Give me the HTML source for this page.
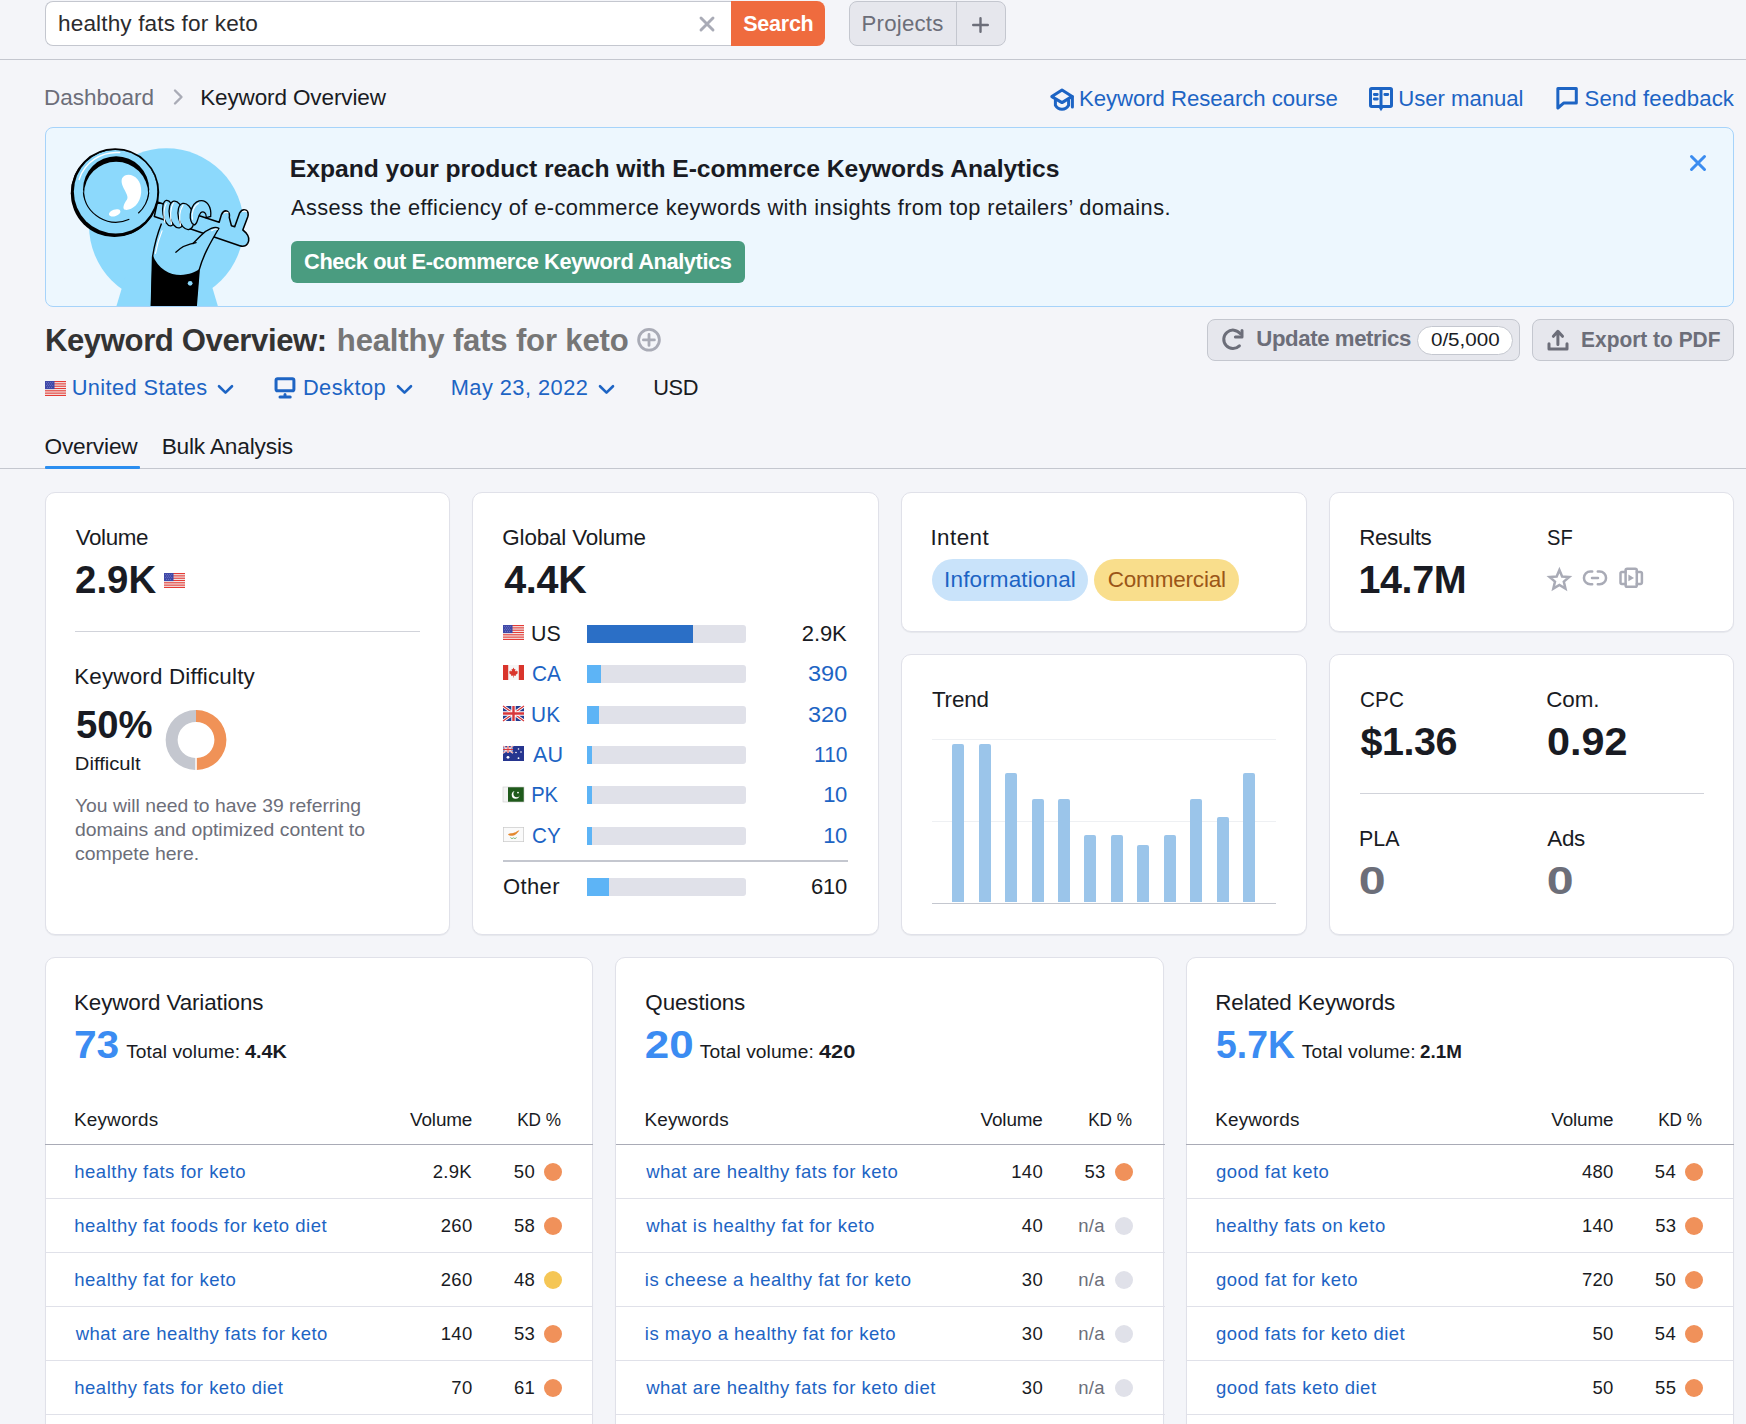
<!DOCTYPE html>
<html><head><meta charset="utf-8"><title>Keyword Overview</title>
<style>
html,body{margin:0;padding:0;}
body{width:1746px;height:1424px;overflow:hidden;background:#f4f5f9;position:relative;font-family:"Liberation Sans",sans-serif;}
.t{position:absolute;white-space:nowrap;}
.a{position:absolute;box-sizing:border-box;}
svg.a{overflow:visible;}
</style></head><body>
<div class=a style="left:0;top:59px;width:1746px;height:1px;background:#c4c7cf"></div>
<div class=a style="left:45px;top:1px;width:687px;height:45px;background:#fff;border:1px solid #c4c7cf;border-right:none;border-radius:8px 0 0 8px"></div>
<svg class=a style="left:699px;top:16px" width="16" height="16" viewBox="0 0 16 16"><path d="M2 2L14 14M14 2L2 14" stroke="#a9abb6" stroke-width="2.9" stroke-linecap="round"/></svg>
<div class=a style="left:731px;top:1px;width:94px;height:45px;background:#ef6b3e;border-radius:0 8px 8px 0"></div>
<div class=a style="left:849px;top:1px;width:157px;height:45px;background:#e6e7ed;border:1px solid #c4c7cf;border-radius:8px"></div>
<div class=a style="left:956px;top:2px;width:1px;height:43px;background:#c4c7cf"></div>
<svg class=a style="left:972px;top:17px" width="17" height="16" viewBox="0 0 17 16"><path d="M8.5 1.2V14.8M1.2 8H15.8" stroke="#6c6e79" stroke-width="2.4" stroke-linecap="round"/></svg>
<svg class=a style="left:172px;top:88px" width="13" height="18" viewBox="0 0 13 18"><path d="M3 2.5L9.5 9L3 15.5" fill="none" stroke="#a9abb6" stroke-width="2.4" stroke-linecap="round" stroke-linejoin="round"/></svg>
<svg class=a style="left:1045px;top:82px" width="35" height="32" viewBox="0 0 35 32"><g fill="none" stroke="#1d64c4" stroke-width="3" stroke-linecap="round" stroke-linejoin="round"><path d="M6.8 14.6L17 8L27.2 14.4L17 20.6Z"/><path d="M10.4 18.2V23.2C12 26 14.5 27.2 17 27.2C19.5 27.2 22 26 23.6 23.2V18.2"/><path d="M27.4 14.6V25"/></g></svg>
<svg class=a style="left:1364px;top:82px" width="35" height="32" viewBox="0 0 35 32"><g fill="none" stroke="#1d64c4" stroke-width="3" stroke-linejoin="round"><rect x="6.5" y="6.5" width="21" height="17.9" rx="1.2"/><path d="M17 6.5V24.4"/></g><path d="M14.7 25.5L17 29.2L19.3 25.5Z" fill="#1d64c4"/><g stroke="#1d64c4" stroke-width="2.8" stroke-linecap="round"><path d="M10.3 12.5H13.3M10.3 17H13.3M20.8 12.5H23.8"/></g></svg>
<svg class=a style="left:1550px;top:82px" width="35" height="32" viewBox="0 0 35 32"><path d="M7.85 26V6.55H26.3V21.1H13.6Z" fill="none" stroke="#1d64c4" stroke-width="3" stroke-linejoin="round"/></svg>
<div class=a style="left:45px;top:127px;width:1689px;height:180px;background:#edf7fe;border:1px solid #a6d3fa;border-radius:8px;overflow:hidden"></div>
<svg class=a style="left:60px;top:140px;overflow:hidden" width="200" height="166" viewBox="0 0 1675 1390">
<g>
<circle cx="891" cy="718" r="648" fill="#8cd9fc"/>
<path d="M545 1150L1250 1150L1325 1400L470 1400Z" fill="#8cd9fc"/>
</g>
<!-- handle rod -->
<path d="M815 520 L1333 688 L1352 625 Q1372 585 1400 596 Q1425 610 1418 650 L1436 719 L1463 727 L1505 610 Q1525 575 1558 588 Q1585 603 1572 645 L1531 753 L1560 780 Q1595 820 1572 865 Q1550 900 1505 885 L790 640 Z" fill="#8cd9fc" stroke="#000" stroke-width="13" stroke-linejoin="round"/>
<path d="M1375 612 Q1395 598 1408 610 M1530 600 Q1550 590 1562 602" fill="none" stroke="#fff" stroke-width="9" stroke-linecap="round"/>
<!-- magnifier outer -->
<circle cx="456" cy="446" r="366" fill="#000"/>
<circle cx="466" cy="432" r="350" fill="#8cd9fc"/>
<circle cx="462" cy="438" r="362" fill="none" stroke="#000" stroke-width="14"/>
<path d="M160 330 A330 330 0 0 1 500 105" fill="none" stroke="#fff" stroke-width="12" stroke-linecap="round"/>
<!-- inner lens -->
<circle cx="470" cy="413" r="277" fill="#000"/>
<circle cx="470" cy="450" r="268" fill="#8cd9fc"/>
<path d="M196 440 A274 274 0 0 0 580.6 663.6" fill="none" stroke="#000" stroke-width="10"/>
<path d="M744 440 A274 274 0 0 1 655.5 613.9" fill="none" stroke="#000" stroke-width="10"/>
<path d="M520 320 C560 255 690 300 680 440 C672 540 600 590 548 585 C520 580 530 540 560 500 C590 460 495 385 520 320 Z" fill="#fff"/>
<ellipse cx="458" cy="610" rx="50" ry="28" transform="rotate(-18 458 610)" fill="#fff"/>
<!-- hand -->
<path d="M850 700 C810 800 790 880 775 980 L765 1400 L1140 1400 L1165 1090 C1200 960 1260 860 1330 740 C1300 720 1240 740 1180 800 C1140 840 1120 860 1110 870" fill="#8cd9fc" stroke="#000" stroke-width="12" stroke-linejoin="round"/>
<path d="M970 940 C1020 890 1080 870 1140 860" fill="none" stroke="#000" stroke-width="10" stroke-linecap="round"/>
<path d="M775 960 C820 1080 920 1130 1010 1130 C1080 1130 1140 1100 1168 1080 L1140 1400 L760 1400 Z" fill="#000"/>
<circle cx="1090" cy="1200" r="20" fill="#8cd9fc"/>
<!-- fingers -->
<g fill="#8cd9fc" stroke="#000" stroke-width="11">
<ellipse cx="910" cy="612" rx="48" ry="108" transform="rotate(-10 910 612)"/>
<ellipse cx="977" cy="624" rx="60" ry="114" transform="rotate(-12 977 624)"/>
<ellipse cx="1055" cy="640" rx="64" ry="112" transform="rotate(-14 1055 640)"/>
<path d="M1108 700 C1070 640 1100 530 1165 510 C1230 495 1270 560 1262 640 L1225 650 C1228 610 1200 590 1178 610 C1150 640 1160 690 1128 712 Z"/>
</g>
<g fill="none" stroke="#fff" stroke-width="9" stroke-linecap="round">
<path d="M878 690 C868 640 868 570 890 530"/>
<path d="M935 705 C920 650 922 570 950 525"/>
<path d="M1010 715 C995 660 1000 590 1030 545"/>
<path d="M1110 665 C1098 610 1120 550 1160 530"/>
<path d="M855 760 C830 820 812 880 800 950"/>
<path d="M1270 760 C1290 745 1305 742 1318 748"/>
</g>
</svg>

<div class=a style="left:291px;top:241px;width:454px;height:42px;background:#4a9c80;border-radius:6px"></div>
<svg class=a style="left:1689px;top:154px" width="18" height="18" viewBox="0 0 18 18"><path d="M2.5 2.5L15.5 15.5M15.5 2.5L2.5 15.5" stroke="#3a8cf0" stroke-width="3" stroke-linecap="round"/></svg>
<svg class=a style="left:630px;top:322px" width="38" height="36" viewBox="0 0 38 36"><g fill="none" stroke="#a9abb6" stroke-width="2.8" stroke-linecap="round"><circle cx="19" cy="17.8" r="10.4"/><path d="M19 12.4V23.4M13.4 17.9H24.4"/></g></svg>
<div class=a style="left:1207px;top:319px;width:313px;height:42px;background:#e6e7ed;border:1px solid #c4c7cf;border-radius:8px"></div>
<svg class=a style="left:1215px;top:322px" width="35" height="35" viewBox="0 0 35 35"><g fill="none" stroke="#6c6e79" stroke-width="3" stroke-linecap="round" stroke-linejoin="round"><path d="M25.2 11.6A9.2 9.2 0 1 0 24.4 23.9"/><path d="M27 8.4V15H20.4"/></g></svg>
<div class=a style="left:1417px;top:326px;width:96px;height:29px;background:#fff;border:1px solid #c4c7cf;border-radius:15px"></div>
<div class=a style="left:1532px;top:319px;width:202px;height:42px;background:#e6e7ed;border:1px solid #c4c7cf;border-radius:8px"></div>
<svg class=a style="left:1540px;top:322px" width="35" height="35" viewBox="0 0 35 35"><g fill="none" stroke="#6c6e79" stroke-width="3" stroke-linecap="round" stroke-linejoin="round"><path d="M17.9 22.6V9.5M13.4 14.3L17.9 9.3L22.5 14.3"/><path d="M9 21.8V27H27V21.8"/></g></svg>
<svg class=a style="left:45px;top:380.5px" width="21" height="15" viewBox="0 0 21 15"><rect width="21" height="15" fill="#f2f2f2"/><g fill="#e53b35"><rect y="0" width="21" height="1.16"/><rect y="2.31" width="21" height="1.16"/><rect y="4.62" width="21" height="1.16"/><rect y="6.92" width="21" height="1.16"/><rect y="9.23" width="21" height="1.16"/><rect y="11.54" width="21" height="1.16"/><rect y="13.84" width="21" height="1.16"/></g><rect width="9.5" height="8.08" fill="#3f48a8"/><g fill="#c9cdf0" opacity="0.7"><circle cx="1.5" cy="1.4" r=".45"/><circle cx="3.6" cy="1.4" r=".45"/><circle cx="5.7" cy="1.4" r=".45"/><circle cx="7.8" cy="1.4" r=".45"/><circle cx="2.5" cy="3" r=".45"/><circle cx="4.6" cy="3" r=".45"/><circle cx="6.7" cy="3" r=".45"/><circle cx="1.5" cy="4.6" r=".45"/><circle cx="3.6" cy="4.6" r=".45"/><circle cx="5.7" cy="4.6" r=".45"/><circle cx="7.8" cy="4.6" r=".45"/><circle cx="2.5" cy="6.2" r=".45"/><circle cx="4.6" cy="6.2" r=".45"/><circle cx="6.7" cy="6.2" r=".45"/></g></svg>

<svg class=a style="left:216.5px;top:384px" width="17" height="11" viewBox="0 0 17 11"><path d="M2 2.2L8.5 8.6L15 2.2" fill="none" stroke="#1d64c4" stroke-width="2.6" stroke-linecap="round" stroke-linejoin="round"/></svg>
<svg class=a style="left:268px;top:372px" width="35" height="32" viewBox="0 0 35 32"><g fill="none" stroke="#1d64c4" stroke-width="3" stroke-linecap="round" stroke-linejoin="round"><rect x="8.05" y="6.8" width="17.85" height="12" rx="1.6"/><path d="M12 24.9H22.2M17 22.6V24.9"/></g></svg>
<svg class=a style="left:395.5px;top:384px" width="17" height="11" viewBox="0 0 17 11"><path d="M2 2.2L8.5 8.6L15 2.2" fill="none" stroke="#1d64c4" stroke-width="2.6" stroke-linecap="round" stroke-linejoin="round"/></svg>
<svg class=a style="left:597.5px;top:384px" width="17" height="11" viewBox="0 0 17 11"><path d="M2 2.2L8.5 8.6L15 2.2" fill="none" stroke="#1d64c4" stroke-width="2.6" stroke-linecap="round" stroke-linejoin="round"/></svg>
<div class=a style="left:0;top:468px;width:1746px;height:1px;background:#c4c7cf"></div>
<div class=a style="left:45px;top:466px;width:95px;height:3px;background:#2b8ef0;border-radius:1px"></div>
<div class=a style="left:45px;top:492px;width:405px;height:443px;background:#fff;border:1px solid #e0e1e9;border-radius:10px;box-shadow:0 1px 1px rgba(25,27,35,0.06)"></div>
<div class=a style="left:472px;top:492px;width:407px;height:443px;background:#fff;border:1px solid #e0e1e9;border-radius:10px;box-shadow:0 1px 1px rgba(25,27,35,0.06)"></div>
<div class=a style="left:901px;top:492px;width:406px;height:140px;background:#fff;border:1px solid #e0e1e9;border-radius:10px;box-shadow:0 1px 1px rgba(25,27,35,0.06)"></div>
<div class=a style="left:1329px;top:492px;width:405px;height:140px;background:#fff;border:1px solid #e0e1e9;border-radius:10px;box-shadow:0 1px 1px rgba(25,27,35,0.06)"></div>
<div class=a style="left:901px;top:654px;width:406px;height:281px;background:#fff;border:1px solid #e0e1e9;border-radius:10px;box-shadow:0 1px 1px rgba(25,27,35,0.06)"></div>
<div class=a style="left:1329px;top:654px;width:405px;height:281px;background:#fff;border:1px solid #e0e1e9;border-radius:10px;box-shadow:0 1px 1px rgba(25,27,35,0.06)"></div>
<div class=a style="left:45px;top:957px;width:548px;height:520px;background:#fff;border:1px solid #e0e1e9;border-radius:10px;box-shadow:0 1px 1px rgba(25,27,35,0.06)"></div>
<div class=a style="left:615px;top:957px;width:549px;height:520px;background:#fff;border:1px solid #e0e1e9;border-radius:10px;box-shadow:0 1px 1px rgba(25,27,35,0.06)"></div>
<div class=a style="left:1186px;top:957px;width:548px;height:520px;background:#fff;border:1px solid #e0e1e9;border-radius:10px;box-shadow:0 1px 1px rgba(25,27,35,0.06)"></div>
<svg class=a style="left:164px;top:572.5px" width="21" height="15" viewBox="0 0 21 15"><rect width="21" height="15" fill="#f2f2f2"/><g fill="#e53b35"><rect y="0" width="21" height="1.16"/><rect y="2.31" width="21" height="1.16"/><rect y="4.62" width="21" height="1.16"/><rect y="6.92" width="21" height="1.16"/><rect y="9.23" width="21" height="1.16"/><rect y="11.54" width="21" height="1.16"/><rect y="13.84" width="21" height="1.16"/></g><rect width="9.5" height="8.08" fill="#3f48a8"/><g fill="#c9cdf0" opacity="0.7"><circle cx="1.5" cy="1.4" r=".45"/><circle cx="3.6" cy="1.4" r=".45"/><circle cx="5.7" cy="1.4" r=".45"/><circle cx="7.8" cy="1.4" r=".45"/><circle cx="2.5" cy="3" r=".45"/><circle cx="4.6" cy="3" r=".45"/><circle cx="6.7" cy="3" r=".45"/><circle cx="1.5" cy="4.6" r=".45"/><circle cx="3.6" cy="4.6" r=".45"/><circle cx="5.7" cy="4.6" r=".45"/><circle cx="7.8" cy="4.6" r=".45"/><circle cx="2.5" cy="6.2" r=".45"/><circle cx="4.6" cy="6.2" r=".45"/><circle cx="6.7" cy="6.2" r=".45"/></g></svg>

<div class=a style="left:75px;top:631px;width:345px;height:1px;background:#d1d3da"></div>
<svg class=a style="left:166px;top:710px" width="60" height="60" viewBox="0 0 60 60"><path d="M30 0A30 30 0 0 0 29.3 60V48A18 18 0 0 1 30 12Z" fill="#c4c7cf"/><path d="M30 0A30 30 0 0 1 30.8 60V48A18 18 0 0 0 30 12Z" fill="#f09257"/></svg>
<svg class=a style="left:503px;top:625.0px" width="21" height="15" viewBox="0 0 21 15"><rect width="21" height="15" fill="#f2f2f2"/><g fill="#e53b35"><rect y="0" width="21" height="1.16"/><rect y="2.31" width="21" height="1.16"/><rect y="4.62" width="21" height="1.16"/><rect y="6.92" width="21" height="1.16"/><rect y="9.23" width="21" height="1.16"/><rect y="11.54" width="21" height="1.16"/><rect y="13.84" width="21" height="1.16"/></g><rect width="9.5" height="8.08" fill="#3f48a8"/><g fill="#c9cdf0" opacity="0.7"><circle cx="1.5" cy="1.4" r=".45"/><circle cx="3.6" cy="1.4" r=".45"/><circle cx="5.7" cy="1.4" r=".45"/><circle cx="7.8" cy="1.4" r=".45"/><circle cx="2.5" cy="3" r=".45"/><circle cx="4.6" cy="3" r=".45"/><circle cx="6.7" cy="3" r=".45"/><circle cx="1.5" cy="4.6" r=".45"/><circle cx="3.6" cy="4.6" r=".45"/><circle cx="5.7" cy="4.6" r=".45"/><circle cx="7.8" cy="4.6" r=".45"/><circle cx="2.5" cy="6.2" r=".45"/><circle cx="4.6" cy="6.2" r=".45"/><circle cx="6.7" cy="6.2" r=".45"/></g></svg>

<div class=a style="left:587px;top:624.8px;width:159px;height:18px;background:#e0e1e9;border-radius:0 3px 3px 0;overflow:hidden"><div style="width:106.0px;height:18px;background:#2b6fc6"></div></div>
<svg class=a style="left:503px;top:665.4px" width="21" height="15" viewBox="0 0 21 15"><rect width="21" height="15" fill="#f6f6f6"/><rect width="5.2" height="15" fill="#d9352c"/><rect x="15.8" width="5.2" height="15" fill="#d9352c"/><path d="M10.5 2.6L11.3 4.3L12.4 3.9L12 6.6L13.4 5.4L13.8 6.4L15 6.2L14.4 7.7L15 8.1L12.6 9.9L12.9 10.9L10.8 10.6V12.6H10.2V10.6L8.1 10.9L8.4 9.9L6 8.1L6.6 7.7L6 6.2L7.2 6.4L7.6 5.4L9 6.6L8.6 3.9L9.7 4.3Z" fill="#d9352c"/></svg>

<div class=a style="left:587px;top:665.2px;width:159px;height:18px;background:#e0e1e9;border-radius:0 3px 3px 0;overflow:hidden"><div style="width:14.0px;height:18px;background:#5db4f6"></div></div>
<svg class=a style="left:503px;top:705.8px" width="21" height="15" viewBox="0 0 21 15"><rect width="21" height="15" fill="#243b8f"/><path d="M0 0L21 15M21 0L0 15" stroke="#fff" stroke-width="3"/><path d="M0 0L21 15M21 0L0 15" stroke="#d7373b" stroke-width="1.2"/><path d="M10.5 0V15M0 7.5H21" stroke="#fff" stroke-width="4.4"/><path d="M10.5 0V15M0 7.5H21" stroke="#d7373b" stroke-width="2.4"/></svg>

<div class=a style="left:587px;top:705.6px;width:159px;height:18px;background:#e0e1e9;border-radius:0 3px 3px 0;overflow:hidden"><div style="width:11.7px;height:18px;background:#5db4f6"></div></div>
<svg class=a style="left:503px;top:746.2px" width="21" height="15" viewBox="0 0 21 15"><rect width="21" height="15" fill="#26358f"/><g><rect width="10" height="7" fill="#26358f"/><path d="M0 0L10 7M10 0L0 7" stroke="#fff" stroke-width="1.6"/><path d="M0 0L10 7M10 0L0 7" stroke="#d7373b" stroke-width=".6"/><path d="M5 0V7M0 3.5H10" stroke="#fff" stroke-width="2.2"/><path d="M5 0V7M0 3.5H10" stroke="#d7373b" stroke-width="1.1"/></g><g fill="#fff"><circle cx="5" cy="11.3" r="1.4"/><circle cx="15.5" cy="3" r=".8"/><circle cx="13" cy="6.5" r=".8"/><circle cx="18" cy="6" r=".8"/><circle cx="15.5" cy="12.2" r=".9"/></g></svg>

<div class=a style="left:587px;top:746.0px;width:159px;height:18px;background:#e0e1e9;border-radius:0 3px 3px 0;overflow:hidden"><div style="width:4.8px;height:18px;background:#5db4f6"></div></div>
<svg class=a style="left:503px;top:786.6px" width="21" height="15" viewBox="0 0 21 15"><rect width="21" height="15" fill="#1f5a1b"/><rect width="5" height="15" fill="#f4f4f4"/><rect x="0" y="0" width="21" height="15" fill="none" stroke="#ccc" stroke-width=".6"/><circle cx="12.6" cy="7.8" r="3.9" fill="#fff"/><circle cx="13.8" cy="6.8" r="3.4" fill="#1f5a1b"/><circle cx="15" cy="5.6" r=".9" fill="#fff"/></svg>

<div class=a style="left:587px;top:786.4px;width:159px;height:18px;background:#e0e1e9;border-radius:0 3px 3px 0;overflow:hidden"><div style="width:4.8px;height:18px;background:#5db4f6"></div></div>
<svg class=a style="left:503px;top:827.0px" width="21" height="15" viewBox="0 0 21 15"><rect x=".35" y=".35" width="20.3" height="14.3" fill="#fafafa" stroke="#c9c9c9" stroke-width=".7"/><path d="M5 7.4C6 6.2 7.6 6.4 9 6.2C10.6 6 12.4 5.6 13.6 4.6C14.4 4 15.4 3.4 16.4 3.2C15.8 4.4 14.6 5.6 13.8 6.6C12.8 7.8 11.2 8.6 9.4 8.8C7.8 9 6 8.6 5 7.4Z" fill="#e4882e"/><path d="M7.5 10.6C8.5 11.8 9.6 11.6 10.4 10.9M13.5 10.6C12.5 11.8 11.4 11.6 10.6 10.9" fill="none" stroke="#6fae6b" stroke-width="1"/></svg>

<div class=a style="left:587px;top:826.8px;width:159px;height:18px;background:#e0e1e9;border-radius:0 3px 3px 0;overflow:hidden"><div style="width:4.8px;height:18px;background:#5db4f6"></div></div>
<div class=a style="left:503px;top:860px;width:345px;height:2px;background:#c4c7cf"></div>
<div class=a style="left:587px;top:878px;width:159px;height:18px;background:#e0e1e9;border-radius:0 3px 3px 0;overflow:hidden"><div style="width:21.8px;height:18px;background:#5db4f6"></div></div>
<div class=a style="left:932px;top:559px;width:156px;height:42px;background:#c9e3fa;border-radius:21px"></div>
<div class=a style="left:1094px;top:559px;width:145px;height:42px;background:#f9de8c;border-radius:21px"></div>
<div class=a style="left:932px;top:739px;width:344px;height:1px;background:#eef0f3"></div>
<div class=a style="left:932px;top:821px;width:344px;height:1px;background:#eef0f3"></div>
<div class=a style="left:952px;top:744px;width:12px;height:158px;background:#9bc5ea;border-radius:2px 2px 0 0"></div>
<div class=a style="left:979px;top:744px;width:12px;height:158px;background:#9bc5ea;border-radius:2px 2px 0 0"></div>
<div class=a style="left:1005px;top:773px;width:12px;height:129px;background:#9bc5ea;border-radius:2px 2px 0 0"></div>
<div class=a style="left:1032px;top:799px;width:12px;height:103px;background:#9bc5ea;border-radius:2px 2px 0 0"></div>
<div class=a style="left:1058px;top:799px;width:12px;height:103px;background:#9bc5ea;border-radius:2px 2px 0 0"></div>
<div class=a style="left:1084px;top:835px;width:12px;height:67px;background:#9bc5ea;border-radius:2px 2px 0 0"></div>
<div class=a style="left:1111px;top:835px;width:12px;height:67px;background:#9bc5ea;border-radius:2px 2px 0 0"></div>
<div class=a style="left:1137px;top:845px;width:12px;height:57px;background:#9bc5ea;border-radius:2px 2px 0 0"></div>
<div class=a style="left:1164px;top:835px;width:12px;height:67px;background:#9bc5ea;border-radius:2px 2px 0 0"></div>
<div class=a style="left:1190px;top:799px;width:12px;height:103px;background:#9bc5ea;border-radius:2px 2px 0 0"></div>
<div class=a style="left:1217px;top:817px;width:12px;height:85px;background:#9bc5ea;border-radius:2px 2px 0 0"></div>
<div class=a style="left:1243px;top:773px;width:12px;height:129px;background:#9bc5ea;border-radius:2px 2px 0 0"></div>
<div class=a style="left:932px;top:903px;width:344px;height:1px;background:#c4c7cf"></div>
<svg class=a style="left:1540px;top:560px" width="110" height="40" viewBox="0 0 110 40"><g fill="none" stroke="#a9abb6" stroke-width="2.5" stroke-linejoin="round" stroke-linecap="round"><path d="M19.4 9.9L22.13 16.45L29.2 17L23.81 21.63L25.45 28.53L19.4 24.84L13.35 28.53L14.99 21.63L9.6 17L16.67 16.45Z" stroke-linejoin="miter"/><path d="M52.2 11.6H50.3A6.3 6.3 0 0 0 50.3 24.3H52.2M57.8 11.6H59.7A6.3 6.3 0 0 1 59.7 24.3H57.8M52 18H58"/><rect x="85.6" y="8.8" width="11.2" height="18" rx="1.6"/><path d="M85.6 11.9H81.9A1.4 1.4 0 0 0 80.5 13.3V22.6A1.4 1.4 0 0 0 81.9 24H85.6M96.8 11.9H100.5A1.4 1.4 0 0 1 101.9 13.3V22.6A1.4 1.4 0 0 1 100.5 24H96.8"/></g><path d="M88.4 14.6L94 18L88.4 21.3Z" fill="#a9abb6"/></svg>
<div class=a style="left:1360px;top:793px;width:344px;height:1px;background:#d1d3da"></div>
<div class=a style="left:45.00px;top:1144px;width:548px;height:1px;background:#a9abb6"></div>
<div class=a style="left:544.00px;top:1162.8px;width:18px;height:18px;border-radius:50%;background:#f0915a"></div>
<div class=a style="left:45.00px;top:1198px;width:548px;height:1px;background:#e0e1e9"></div>
<div class=a style="left:544.00px;top:1216.8px;width:18px;height:18px;border-radius:50%;background:#f0915a"></div>
<div class=a style="left:45.00px;top:1252px;width:548px;height:1px;background:#e0e1e9"></div>
<div class=a style="left:544.00px;top:1270.8px;width:18px;height:18px;border-radius:50%;background:#f5c655"></div>
<div class=a style="left:45.00px;top:1306px;width:548px;height:1px;background:#e0e1e9"></div>
<div class=a style="left:544.00px;top:1324.8px;width:18px;height:18px;border-radius:50%;background:#f0915a"></div>
<div class=a style="left:45.00px;top:1360px;width:548px;height:1px;background:#e0e1e9"></div>
<div class=a style="left:544.00px;top:1378.8px;width:18px;height:18px;border-radius:50%;background:#f0915a"></div>
<div class=a style="left:45.00px;top:1414px;width:548px;height:1px;background:#e0e1e9"></div>
<div class=a style="left:616.00px;top:1144px;width:549px;height:1px;background:#a9abb6"></div>
<div class=a style="left:1114.50px;top:1162.8px;width:18px;height:18px;border-radius:50%;background:#f0915a"></div>
<div class=a style="left:616.00px;top:1198px;width:549px;height:1px;background:#e0e1e9"></div>
<div class=a style="left:1114.50px;top:1216.8px;width:18px;height:18px;border-radius:50%;background:#e0e1e9"></div>
<div class=a style="left:616.00px;top:1252px;width:549px;height:1px;background:#e0e1e9"></div>
<div class=a style="left:1114.50px;top:1270.8px;width:18px;height:18px;border-radius:50%;background:#e0e1e9"></div>
<div class=a style="left:616.00px;top:1306px;width:549px;height:1px;background:#e0e1e9"></div>
<div class=a style="left:1114.50px;top:1324.8px;width:18px;height:18px;border-radius:50%;background:#e0e1e9"></div>
<div class=a style="left:616.00px;top:1360px;width:549px;height:1px;background:#e0e1e9"></div>
<div class=a style="left:1114.50px;top:1378.8px;width:18px;height:18px;border-radius:50%;background:#e0e1e9"></div>
<div class=a style="left:616.00px;top:1414px;width:549px;height:1px;background:#e0e1e9"></div>
<div class=a style="left:1186.00px;top:1144px;width:548px;height:1px;background:#a9abb6"></div>
<div class=a style="left:1685.20px;top:1162.8px;width:18px;height:18px;border-radius:50%;background:#f0915a"></div>
<div class=a style="left:1186.00px;top:1198px;width:548px;height:1px;background:#e0e1e9"></div>
<div class=a style="left:1685.20px;top:1216.8px;width:18px;height:18px;border-radius:50%;background:#f0915a"></div>
<div class=a style="left:1186.00px;top:1252px;width:548px;height:1px;background:#e0e1e9"></div>
<div class=a style="left:1685.20px;top:1270.8px;width:18px;height:18px;border-radius:50%;background:#f0915a"></div>
<div class=a style="left:1186.00px;top:1306px;width:548px;height:1px;background:#e0e1e9"></div>
<div class=a style="left:1685.20px;top:1324.8px;width:18px;height:18px;border-radius:50%;background:#f0915a"></div>
<div class=a style="left:1186.00px;top:1360px;width:548px;height:1px;background:#e0e1e9"></div>
<div class=a style="left:1685.20px;top:1378.8px;width:18px;height:18px;border-radius:50%;background:#f0915a"></div>
<div class=a style="left:1186.00px;top:1414px;width:548px;height:1px;background:#e0e1e9"></div>
<div class=t style="left:58.03px;top:13.00px;font-size:22.6px;line-height:22.6px;color:#2b2b2e;letter-spacing:0.131px;">healthy fats for keto</div>
<div class=t style="left:743.28px;top:14.01px;font-size:21.5px;line-height:21.5px;color:#fff;font-weight:700;letter-spacing:-0.253px;">Search</div>
<div class=t style="left:861.58px;top:13.01px;font-size:22.2px;line-height:22.2px;color:#6c6e79;letter-spacing:0.224px;">Projects</div>
<div class=t style="left:44.05px;top:87.02px;font-size:22.5px;line-height:22.5px;color:#6c6e79;letter-spacing:-0.023px;">Dashboard</div>
<div class=t style="left:200.15px;top:87.02px;font-size:22.5px;line-height:22.5px;color:#191b23;letter-spacing:-0.118px;">Keyword Overview</div>
<div class=t style="left:1078.98px;top:88.01px;font-size:22.2px;line-height:22.2px;color:#1d64c4;letter-spacing:-0.055px;">Keyword Research course</div>
<div class=t style="left:1398.29px;top:88.01px;font-size:22.2px;line-height:22.2px;color:#1d64c4;letter-spacing:-0.058px;">User manual</div>
<div class=t style="left:1584.49px;top:88.01px;font-size:22.2px;line-height:22.2px;color:#1d64c4;letter-spacing:0.119px;">Send feedback</div>
<div class=t style="left:289.85px;top:157.02px;font-size:24.7px;line-height:24.7px;color:#191b23;font-weight:700;letter-spacing:-0.054px;">Expand your product reach with E-commerce Keywords Analytics</div>
<div class=t style="left:290.96px;top:197.00px;font-size:21.8px;line-height:21.8px;color:#191b23;letter-spacing:0.395px;">Assess the efficiency of e-commerce keywords with insights from top retailers’ domains.</div>
<div class=t style="left:304.11px;top:251.00px;font-size:21.8px;line-height:21.8px;color:#fff;font-weight:700;letter-spacing:-0.399px;">Check out E-commerce Keyword Analytics</div>
<div class=t style="left:44.92px;top:325.02px;font-size:31.1px;line-height:31.1px;color:#333333;font-weight:700;letter-spacing:-0.395px;">Keyword Overview:</div>
<div class=t style="left:336.83px;top:325.02px;font-size:31.1px;line-height:31.1px;color:#767676;font-weight:700;letter-spacing:-0.178px;">healthy fats for keto</div>
<div class=t style="left:1256.37px;top:328.01px;font-size:22.2px;line-height:22.2px;color:#6c6e79;font-weight:700;letter-spacing:-0.412px;">Update metrics</div>
<div class=t style="left:1430.85px;top:330.01px;font-size:19.2px;line-height:19.2px;color:#191b23;transform:scaleX(1.0731);transform-origin:0.75px 0;">0/5,000</div>
<div class=t style="left:1581.31px;top:329.01px;font-size:22.2px;line-height:22.2px;color:#6c6e79;font-weight:700;transform:scaleX(0.9422);transform-origin:1.49px 0;">Export to PDF</div>
<div class=t style="left:71.72px;top:377.00px;font-size:21.8px;line-height:21.8px;color:#1d64c4;letter-spacing:0.384px;">United States</div>
<div class=t style="left:302.91px;top:377.00px;font-size:21.8px;line-height:21.8px;color:#1d64c4;letter-spacing:0.472px;">Desktop</div>
<div class=t style="left:450.71px;top:377.00px;font-size:21.8px;line-height:21.8px;color:#1d64c4;letter-spacing:0.463px;">May 23, 2022</div>
<div class=t style="left:653.32px;top:377.00px;font-size:21.8px;line-height:21.8px;color:#191b23;letter-spacing:-0.453px;">USD</div>
<div class=t style="left:44.42px;top:435.01px;font-size:22.7px;line-height:22.7px;color:#191b23;letter-spacing:-0.178px;">Overview</div>
<div class=t style="left:161.64px;top:435.01px;font-size:22.7px;line-height:22.7px;color:#191b23;letter-spacing:-0.182px;">Bulk Analysis</div>
<div class=t style="left:75.70px;top:527.01px;font-size:22.4px;line-height:22.4px;color:#191b23;letter-spacing:-0.359px;">Volume</div>
<div class=t style="left:75.23px;top:560.01px;font-size:39.5px;line-height:39.5px;color:#191b23;font-weight:700;transform:scaleX(0.9718);transform-origin:1.37px 0;">2.9K</div>
<div class=t style="left:74.26px;top:666.01px;font-size:22.4px;line-height:22.4px;color:#191b23;letter-spacing:0.174px;">Keyword Difficulty</div>
<div class=t style="left:75.78px;top:705.01px;font-size:39.5px;line-height:39.5px;color:#191b23;font-weight:700;transform:scaleX(0.9687);transform-origin:1.22px 0;">50%</div>
<div class=t style="left:74.50px;top:755.01px;font-size:18.3px;line-height:18.3px;color:#191b23;transform:scaleX(1.1039);transform-origin:1.50px 0;">Difficult</div>
<div class=t style="left:75.20px;top:797.02px;font-size:18.2px;line-height:18.2px;color:#6c6e79;transform:scaleX(1.0623);transform-origin:0.40px 0;">You will need to have 39 referring</div>
<div class=t style="left:74.84px;top:821.01px;font-size:18.2px;line-height:18.2px;color:#6c6e79;transform:scaleX(1.0663);transform-origin:0.76px 0;">domains and optimized content to</div>
<div class=t style="left:74.83px;top:845.02px;font-size:18.2px;line-height:18.2px;color:#6c6e79;transform:scaleX(1.0691);transform-origin:0.77px 0;">compete here.</div>
<div class=t style="left:502.37px;top:527.01px;font-size:22.4px;line-height:22.4px;color:#191b23;letter-spacing:-0.168px;">Global Volume</div>
<div class=t style="left:504.20px;top:560.00px;font-size:39.5px;line-height:39.5px;color:#191b23;font-weight:700;letter-spacing:-0.291px;">4.4K</div>
<div class=t style="left:531.20px;top:623.01px;font-size:22px;line-height:22px;color:#191b23;transform:scaleX(0.9729);transform-origin:1.70px 0;">US</div>
<div class=t style="left:801.79px;top:623.01px;font-size:22px;line-height:22px;color:#191b23;letter-spacing:-0.104px;">2.9K</div>
<div class=t style="left:531.78px;top:663.00px;font-size:22px;line-height:22px;color:#1d64c4;transform:scaleX(0.9455);transform-origin:1.12px 0;">CA</div>
<div class=t style="left:808.16px;top:663.00px;font-size:22px;line-height:22px;color:#1d64c4;transform:scaleX(1.0708);transform-origin:0.84px 0;">390</div>
<div class=t style="left:531.20px;top:704.01px;font-size:22px;line-height:22px;color:#1d64c4;transform:scaleX(0.9470);transform-origin:1.70px 0;">UK</div>
<div class=t style="left:808.36px;top:704.01px;font-size:22px;line-height:22px;color:#1d64c4;transform:scaleX(1.0651);transform-origin:0.84px 0;">320</div>
<div class=t style="left:532.86px;top:744.00px;font-size:22px;line-height:22px;color:#1d64c4;transform:scaleX(0.9819);transform-origin:0.04px 0;">AU</div>
<div class=t style="left:813.82px;top:744.00px;font-size:22px;line-height:22px;color:#1d64c4;transform:scaleX(0.9526);transform-origin:1.68px 0;">110</div>
<div class=t style="left:531.10px;top:784.01px;font-size:22px;line-height:22px;color:#1d64c4;transform:scaleX(0.9155);transform-origin:1.80px 0;">PK</div>
<div class=t style="left:823.22px;top:784.01px;font-size:22px;line-height:22px;color:#1d64c4;letter-spacing:-0.349px;">10</div>
<div class=t style="left:531.78px;top:825.01px;font-size:22px;line-height:22px;color:#1d64c4;transform:scaleX(0.9392);transform-origin:1.12px 0;">CY</div>
<div class=t style="left:823.22px;top:825.01px;font-size:22px;line-height:22px;color:#1d64c4;letter-spacing:-0.349px;">10</div>
<div class=t style="left:502.96px;top:876.00px;font-size:22px;line-height:22px;color:#191b23;letter-spacing:0.394px;">Other</div>
<div class=t style="left:810.88px;top:876.00px;font-size:22px;line-height:22px;color:#191b23;letter-spacing:-0.221px;">610</div>
<div class=t style="left:930.43px;top:527.00px;font-size:22.4px;line-height:22.4px;color:#191b23;letter-spacing:0.460px;">Intent</div>
<div class=t style="left:944.12px;top:569.02px;font-size:22.5px;line-height:22.5px;color:#1d64c4;letter-spacing:0.134px;">Informational</div>
<div class=t style="left:1107.66px;top:569.02px;font-size:22.5px;line-height:22.5px;color:#9b5618;letter-spacing:-0.174px;">Commercial</div>
<div class=t style="left:931.90px;top:689.00px;font-size:22.4px;line-height:22.4px;color:#191b23;letter-spacing:-0.156px;">Trend</div>
<div class=t style="left:1359.16px;top:527.00px;font-size:22.4px;line-height:22.4px;color:#191b23;letter-spacing:-0.337px;">Results</div>
<div class=t style="left:1546.98px;top:527.00px;font-size:22.4px;line-height:22.4px;color:#191b23;transform:scaleX(0.8985);transform-origin:1.02px 0;">SF</div>
<div class=t style="left:1358.51px;top:560.01px;font-size:39.5px;line-height:39.5px;color:#191b23;font-weight:700;letter-spacing:-0.417px;">14.7M</div>
<div class=t style="left:1359.56px;top:689.00px;font-size:22.4px;line-height:22.4px;color:#191b23;transform:scaleX(0.9273);transform-origin:1.14px 0;">CPC</div>
<div class=t style="left:1546.26px;top:689.00px;font-size:22.4px;line-height:22.4px;color:#191b23;letter-spacing:-0.106px;">Com.</div>
<div class=t style="left:1360.48px;top:722.02px;font-size:39.5px;line-height:39.5px;color:#191b23;font-weight:700;letter-spacing:-0.478px;">$1.36</div>
<div class=t style="left:1546.94px;top:722.02px;font-size:39.5px;line-height:39.5px;color:#191b23;font-weight:700;transform:scaleX(1.0468);transform-origin:1.56px 0;">0.92</div>
<div class=t style="left:1358.86px;top:828.01px;font-size:22.4px;line-height:22.4px;color:#191b23;transform:scaleX(0.9568);transform-origin:1.84px 0;">PLA</div>
<div class=t style="left:1547.36px;top:828.01px;font-size:22.4px;line-height:22.4px;color:#191b23;letter-spacing:-0.370px;">Ads</div>
<div class=t style="left:1359.44px;top:861.01px;font-size:39.5px;line-height:39.5px;color:#6c6e79;font-weight:700;transform:scaleX(1.2243);transform-origin:1.56px 0;">0</div>
<div class=t style="left:1546.94px;top:861.01px;font-size:39.5px;line-height:39.5px;color:#6c6e79;font-weight:700;transform:scaleX(1.2243);transform-origin:1.56px 0;">0</div>
<div class=t style="left:74.06px;top:992.00px;font-size:22.4px;line-height:22.4px;color:#191b23;letter-spacing:-0.110px;">Keyword Variations</div>
<div class=t style="left:74.32px;top:1025.01px;font-size:39.2px;line-height:39.2px;color:#3b8cf2;font-weight:700;transform:scaleX(1.0372);transform-origin:1.68px 0;">73</div>
<div class=t style="left:126.17px;top:1042.00px;font-size:19.2px;line-height:19.2px;color:#191b23;letter-spacing:0.070px;">Total volume:</div>
<div class=t style="left:244.71px;top:1042.00px;font-size:19.2px;line-height:19.2px;color:#191b23;font-weight:700;transform:scaleX(1.0334);transform-origin:0.29px 0;">4.4K</div>
<div class=t style="left:74.05px;top:1111.00px;font-size:18.9px;line-height:18.9px;color:#191b23;letter-spacing:0.169px;">Keywords</div>
<div class=t style="left:410.12px;top:1111.00px;font-size:18.9px;line-height:18.9px;color:#191b23;letter-spacing:-0.159px;">Volume</div>
<div class=t style="left:517.15px;top:1111.00px;font-size:18.9px;line-height:18.9px;color:#191b23;transform:scaleX(0.9094);transform-origin:1.55px 0;">KD %</div>
<div class=t style="left:74.32px;top:1163.01px;font-size:18.5px;line-height:18.5px;color:#1d64c4;letter-spacing:0.490px;">healthy fats for keto</div>
<div class=t style="left:432.75px;top:1163.01px;font-size:18.5px;line-height:18.5px;color:#191b23;letter-spacing:0.300px;">2.9K</div>
<div class=t style="left:513.84px;top:1163.01px;font-size:18.5px;line-height:18.5px;color:#191b23;letter-spacing:0.300px;">50</div>
<div class=t style="left:74.32px;top:1217.01px;font-size:18.5px;line-height:18.5px;color:#1d64c4;letter-spacing:0.490px;">healthy fat foods for keto diet</div>
<div class=t style="left:440.75px;top:1217.01px;font-size:18.5px;line-height:18.5px;color:#191b23;letter-spacing:0.300px;">260</div>
<div class=t style="left:513.93px;top:1217.01px;font-size:18.5px;line-height:18.5px;color:#191b23;letter-spacing:0.300px;">58</div>
<div class=t style="left:74.32px;top:1271.01px;font-size:18.5px;line-height:18.5px;color:#1d64c4;letter-spacing:0.490px;">healthy fat for keto</div>
<div class=t style="left:440.75px;top:1271.01px;font-size:18.5px;line-height:18.5px;color:#191b23;letter-spacing:0.300px;">260</div>
<div class=t style="left:513.93px;top:1271.01px;font-size:18.5px;line-height:18.5px;color:#191b23;letter-spacing:0.300px;">48</div>
<div class=t style="left:75.63px;top:1325.01px;font-size:18.5px;line-height:18.5px;color:#1d64c4;letter-spacing:0.490px;">what are healthy fats for keto</div>
<div class=t style="left:440.75px;top:1325.01px;font-size:18.5px;line-height:18.5px;color:#191b23;letter-spacing:0.300px;">140</div>
<div class=t style="left:513.93px;top:1325.01px;font-size:18.5px;line-height:18.5px;color:#191b23;letter-spacing:0.300px;">53</div>
<div class=t style="left:74.32px;top:1379.01px;font-size:18.5px;line-height:18.5px;color:#1d64c4;letter-spacing:0.490px;">healthy fats for keto diet</div>
<div class=t style="left:451.34px;top:1379.01px;font-size:18.5px;line-height:18.5px;color:#191b23;letter-spacing:0.300px;">70</div>
<div class=t style="left:514.03px;top:1379.01px;font-size:18.5px;line-height:18.5px;color:#191b23;letter-spacing:0.300px;">61</div>
<div class=t style="left:645.34px;top:992.00px;font-size:22.4px;line-height:22.4px;color:#191b23;letter-spacing:-0.110px;">Questions</div>
<div class=t style="left:645.14px;top:1025.01px;font-size:39.2px;line-height:39.2px;color:#3b8cf2;font-weight:700;transform:scaleX(1.1224);transform-origin:1.36px 0;">20</div>
<div class=t style="left:699.87px;top:1042.00px;font-size:19.2px;line-height:19.2px;color:#191b23;letter-spacing:0.070px;">Total volume:</div>
<div class=t style="left:818.61px;top:1042.00px;font-size:19.2px;line-height:19.2px;color:#191b23;font-weight:700;transform:scaleX(1.1345);transform-origin:0.29px 0;">420</div>
<div class=t style="left:644.55px;top:1111.00px;font-size:18.9px;line-height:18.9px;color:#191b23;letter-spacing:0.169px;">Keywords</div>
<div class=t style="left:980.62px;top:1111.00px;font-size:18.9px;line-height:18.9px;color:#191b23;letter-spacing:-0.159px;">Volume</div>
<div class=t style="left:1087.65px;top:1111.00px;font-size:18.9px;line-height:18.9px;color:#191b23;transform:scaleX(0.9094);transform-origin:1.55px 0;">KD %</div>
<div class=t style="left:646.13px;top:1163.01px;font-size:18.5px;line-height:18.5px;color:#1d64c4;letter-spacing:0.490px;">what are healthy fats for keto</div>
<div class=t style="left:1011.25px;top:1163.01px;font-size:18.5px;line-height:18.5px;color:#191b23;letter-spacing:0.300px;">140</div>
<div class=t style="left:1084.43px;top:1163.01px;font-size:18.5px;line-height:18.5px;color:#191b23;letter-spacing:0.300px;">53</div>
<div class=t style="left:646.13px;top:1217.01px;font-size:18.5px;line-height:18.5px;color:#1d64c4;letter-spacing:0.490px;">what is healthy fat for keto</div>
<div class=t style="left:1021.84px;top:1217.01px;font-size:18.5px;line-height:18.5px;color:#191b23;letter-spacing:0.300px;">40</div>
<div class=t style="left:1078.18px;top:1217.01px;font-size:18.5px;line-height:18.5px;color:#6c6e79;letter-spacing:0.300px;">n/a</div>
<div class=t style="left:644.86px;top:1271.01px;font-size:18.5px;line-height:18.5px;color:#1d64c4;letter-spacing:0.490px;">is cheese a healthy fat for keto</div>
<div class=t style="left:1021.84px;top:1271.01px;font-size:18.5px;line-height:18.5px;color:#191b23;letter-spacing:0.300px;">30</div>
<div class=t style="left:1078.18px;top:1271.01px;font-size:18.5px;line-height:18.5px;color:#6c6e79;letter-spacing:0.300px;">n/a</div>
<div class=t style="left:644.86px;top:1325.01px;font-size:18.5px;line-height:18.5px;color:#1d64c4;letter-spacing:0.490px;">is mayo a healthy fat for keto</div>
<div class=t style="left:1021.84px;top:1325.01px;font-size:18.5px;line-height:18.5px;color:#191b23;letter-spacing:0.300px;">30</div>
<div class=t style="left:1078.18px;top:1325.01px;font-size:18.5px;line-height:18.5px;color:#6c6e79;letter-spacing:0.300px;">n/a</div>
<div class=t style="left:646.13px;top:1379.01px;font-size:18.5px;line-height:18.5px;color:#1d64c4;letter-spacing:0.490px;">what are healthy fats for keto diet</div>
<div class=t style="left:1021.84px;top:1379.01px;font-size:18.5px;line-height:18.5px;color:#191b23;letter-spacing:0.300px;">30</div>
<div class=t style="left:1078.18px;top:1379.01px;font-size:18.5px;line-height:18.5px;color:#6c6e79;letter-spacing:0.300px;">n/a</div>
<div class=t style="left:1215.26px;top:992.00px;font-size:22.4px;line-height:22.4px;color:#191b23;letter-spacing:-0.110px;">Related Keywords</div>
<div class=t style="left:1215.99px;top:1025.01px;font-size:39.2px;line-height:39.2px;color:#3b8cf2;font-weight:700;transform:scaleX(0.9518);transform-origin:1.21px 0;">5.7K</div>
<div class=t style="left:1301.77px;top:1042.00px;font-size:19.2px;line-height:19.2px;color:#191b23;letter-spacing:0.070px;">Total volume:</div>
<div class=t style="left:1419.73px;top:1042.00px;font-size:19.2px;line-height:19.2px;color:#191b23;font-weight:700;transform:scaleX(0.9798);transform-origin:0.67px 0;">2.1M</div>
<div class=t style="left:1215.25px;top:1111.00px;font-size:18.9px;line-height:18.9px;color:#191b23;letter-spacing:0.169px;">Keywords</div>
<div class=t style="left:1551.32px;top:1111.00px;font-size:18.9px;line-height:18.9px;color:#191b23;letter-spacing:-0.159px;">Volume</div>
<div class=t style="left:1658.35px;top:1111.00px;font-size:18.9px;line-height:18.9px;color:#191b23;transform:scaleX(0.9094);transform-origin:1.55px 0;">KD %</div>
<div class=t style="left:1216.02px;top:1163.01px;font-size:18.5px;line-height:18.5px;color:#1d64c4;letter-spacing:0.490px;">good fat keto</div>
<div class=t style="left:1581.95px;top:1163.01px;font-size:18.5px;line-height:18.5px;color:#191b23;letter-spacing:0.300px;">480</div>
<div class=t style="left:1654.86px;top:1163.01px;font-size:18.5px;line-height:18.5px;color:#191b23;letter-spacing:0.300px;">54</div>
<div class=t style="left:1215.52px;top:1217.01px;font-size:18.5px;line-height:18.5px;color:#1d64c4;letter-spacing:0.490px;">healthy fats on keto</div>
<div class=t style="left:1581.95px;top:1217.01px;font-size:18.5px;line-height:18.5px;color:#191b23;letter-spacing:0.300px;">140</div>
<div class=t style="left:1655.13px;top:1217.01px;font-size:18.5px;line-height:18.5px;color:#191b23;letter-spacing:0.300px;">53</div>
<div class=t style="left:1216.02px;top:1271.01px;font-size:18.5px;line-height:18.5px;color:#1d64c4;letter-spacing:0.490px;">good fat for keto</div>
<div class=t style="left:1581.95px;top:1271.01px;font-size:18.5px;line-height:18.5px;color:#191b23;letter-spacing:0.300px;">720</div>
<div class=t style="left:1655.04px;top:1271.01px;font-size:18.5px;line-height:18.5px;color:#191b23;letter-spacing:0.300px;">50</div>
<div class=t style="left:1216.02px;top:1325.01px;font-size:18.5px;line-height:18.5px;color:#1d64c4;letter-spacing:0.490px;">good fats for keto diet</div>
<div class=t style="left:1592.54px;top:1325.01px;font-size:18.5px;line-height:18.5px;color:#191b23;letter-spacing:0.300px;">50</div>
<div class=t style="left:1654.86px;top:1325.01px;font-size:18.5px;line-height:18.5px;color:#191b23;letter-spacing:0.300px;">54</div>
<div class=t style="left:1216.02px;top:1379.01px;font-size:18.5px;line-height:18.5px;color:#1d64c4;letter-spacing:0.490px;">good fats keto diet</div>
<div class=t style="left:1592.54px;top:1379.01px;font-size:18.5px;line-height:18.5px;color:#191b23;letter-spacing:0.300px;">50</div>
<div class=t style="left:1655.10px;top:1379.01px;font-size:18.5px;line-height:18.5px;color:#191b23;letter-spacing:0.300px;">55</div>
</body></html>
